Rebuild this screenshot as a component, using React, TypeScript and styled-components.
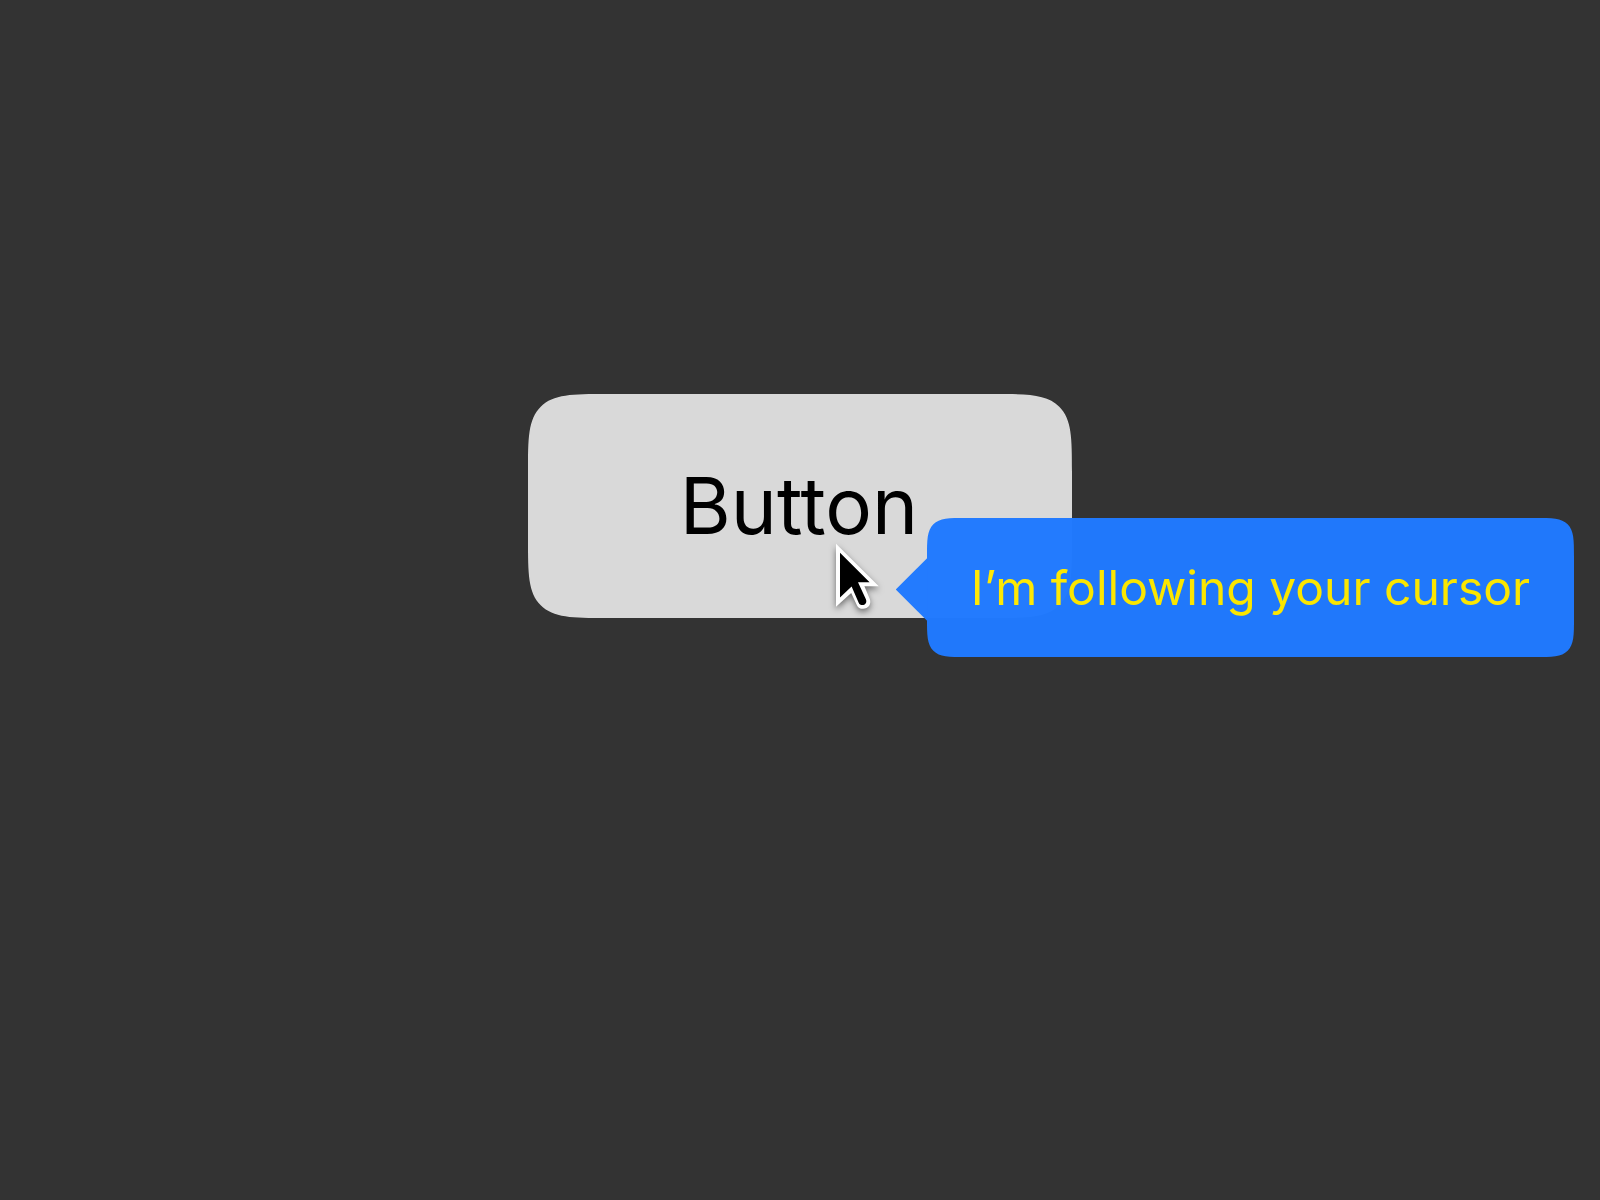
import React from "react";
import styled, { createGlobalStyle } from "styled-components";

const GlobalStyle = createGlobalStyle`
  *, *::before, *::after { box-sizing: border-box; }
  body {
    margin: 0;
    background: #333333;
    font-family: Inter, "Liberation Sans", sans-serif;
  }
`;

const Stage = styled.main`
  display: flex;
  align-items: center;
  justify-content: center;
  min-height: 100vh;
  padding-bottom: 188px;
  overflow: hidden;
`;

const Anchor = styled.div`
  position: relative;
`;

const Button = styled.button`
  display: block;
  padding: 66px 154px 66px 152px;
  border: 0;
  border-radius: 80px;
  corner-shape: squircle;
  background: #d9d9d9;
  color: #000;
  font: inherit;
  font-size: 78px;
  line-height: 92px;
  white-space: nowrap;
`;

const Cursor = styled.svg`
  position: absolute;
  left: 304px;
  top: 146px;
  width: 56px;
  height: 76px;
  overflow: visible;
  pointer-events: none;
  filter: drop-shadow(0 3px 3px rgba(0, 0, 0, 0.5));
`;

const Tooltip = styled.div`
  position: absolute;
  left: 368px;
  top: 124px;
  display: flex;
  align-items: center;
  color: #ffea00;
  font-size: 48px;
  line-height: 59px;
  white-space: nowrap;
  opacity: 0.98;
`;

/* The arrow tucks one pixel under the bubble so that no seam shows. */
const Arrow = styled.span`
  width: 32px;
  height: 64px;
  margin: 4px -1px 0 0;
  background: #207aff;
  clip-path: polygon(0 50%, 100% 0, 100% 100%);
`;

const Bubble = styled.span`
  padding: 40px 44px;
  border-radius: 40px;
  corner-shape: squircle;
  background: #207aff;
`;

export default function App() {
  return (
    <>
      <GlobalStyle />
      <Stage>
        <Anchor>
          <Button type="button" aria-describedby="cursor-tip">
            Button
          </Button>
          <Cursor viewBox="0 0 56 76" aria-hidden="true">
            <path
              d="M4 3.8 L46.8 46.2 H32.4 L37.8 59 C39.6 64.4 36.2 68.8 31 68.8 C28.2 68.8 26 67.6 25 65.4 L19.2 53 L4 66.8 Z"
              fill="#fff"
            />
            <path
              d="M8 12.8 L37.6 42.2 H26 L34 59.4 C35.2 62.6 33 65 30.4 65 C28.6 65 27.4 64.4 26.8 63 L19.6 46.6 L8 57.6 Z"
              fill="#000"
            />
          </Cursor>
          <Tooltip role="tooltip" id="cursor-tip">
            <Arrow />
            <Bubble>I’m following your cursor</Bubble>
          </Tooltip>
        </Anchor>
      </Stage>
    </>
  );
}
